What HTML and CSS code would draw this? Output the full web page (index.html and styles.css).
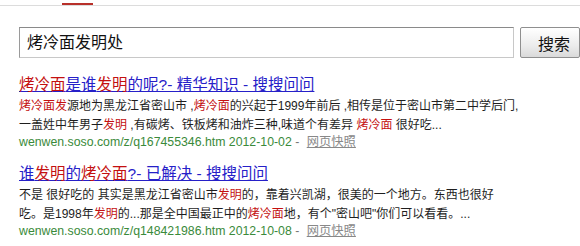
FILE: index.html
```html
<!DOCTYPE html>
<html lang="zh-CN">
<head>
    <meta charset="UTF-8">
    <title>烤冷面发明处 - 搜搜</title>
    <link rel="stylesheet" href="styles.css">
</head>
<body>
    <div class="top-bar">
        <div class="top-tab"></div>
    </div>

    <div class="search-row">
        <div class="search-input">烤冷面发明处</div>
        <button class="search-button">搜索</button>
    </div>

    <div class="results">
        <div class="result">
            <a class="result-title" href="#"><em>烤冷面</em>是谁<em>发明</em>的呢?- 精华知识 - 搜搜问问</a>
            <p class="result-desc">
                <em>烤冷面发</em>源地为黑龙江省密山市 ,<em>烤冷面</em>的兴起于1999年前后 ,相传是位于密山市第二中学后门,<br>
                一盖姓中年男子<em>发明</em> ,有碳烤、铁板烤和油炸三种,味道个有差异 <em>烤冷面</em> 很好吃...
            </p>
            <div class="result-meta">
                <span class="result-url">wenwen.soso.com/z/q167455346.htm 2012-10-02</span> -
                <a class="snapshot" href="#">网页快照</a>
            </div>
        </div>

        <div class="result">
            <a class="result-title" href="#">谁<em>发明</em>的<em>烤冷面</em>?- 已解决 - 搜搜问问</a>
            <p class="result-desc">
                不是 很好吃的 其实是黑龙江省密山市<em>发明</em>的，靠着兴凯湖，很美的一个地方。东西也很好<br>
                吃。是1998年<em>发明</em>的...那是全中国最正中的<em>烤冷面</em>地，有个"密山吧"你们可以看看。...
            </p>
            <div class="result-meta">
                <span class="result-url">wenwen.soso.com/z/q148421986.htm 2012-10-08</span> -
                <a class="snapshot" href="#">网页快照</a>
            </div>
        </div>
    </div>
</body>
</html>
```

FILE: styles.css
```css
* {
    margin: 0;
    padding: 0;
    box-sizing: border-box;
}

body {
    font-family: "Liberation Sans", "Noto Sans CJK SC", sans-serif;
    background: #ffffff;
    color: #1e1e1e;
    width: 580px;
    height: 246px;
    overflow: hidden;
}

.top-bar {
    margin-top: 5px;
    height: 1px;
    background: #dcdcdc;
    position: relative;
}

.top-tab {
    position: absolute;
    left: 62px;
    top: -2px;
    width: 31px;
    height: 2px;
    background: #b8302a;
}

.search-row {
    display: flex;
    gap: 6px;
    margin: 21px 0 0 19px;
}

.search-input {
    width: 512px;
    height: 31px;
    border: 1px solid #c8c8c8;
    border-top-color: #8a8a8a;
    border-left-color: #9a9a9a;
    padding: 4px 0 0 7px;
    font-size: 16px;
    line-height: 22px;
    color: #111111;
    white-space: nowrap;
}

.search-button {
    flex: none;
    width: 60px;
    height: 31px;
    border: 1px solid #8f8f8f;
    border-radius: 2px;
    background: linear-gradient(#ffffff 0%, #ececec 60%, #dadada 100%);
    font-family: "Noto Sans CJK SC", sans-serif;
    font-size: 16px;
    text-align: left;
    padding-left: 17px;
    color: #111111;
}

.results {
    padding: 17px 0 0 19px;
}

.result {
    margin-bottom: 14px;
}

.result-title {
    display: inline-block;
    font-size: 15.5px;
    line-height: 19px;
    color: #2620c8;
    text-decoration: underline;
    white-space: nowrap;
}

.result-title em,
.result-desc em {
    font-style: normal;
    color: #c41010;
}

.result-desc {
    margin-top: 3px;
    font-size: 12px;
    line-height: 19px;
    white-space: nowrap;
}

.result-meta {
    font-size: 12.3px;
    line-height: 15px;
    color: #777777;
    white-space: nowrap;
}

.result-url {
    color: #3a8a3a;
}

.snapshot {
    margin-left: 4px;
    color: #888888;
}
```
